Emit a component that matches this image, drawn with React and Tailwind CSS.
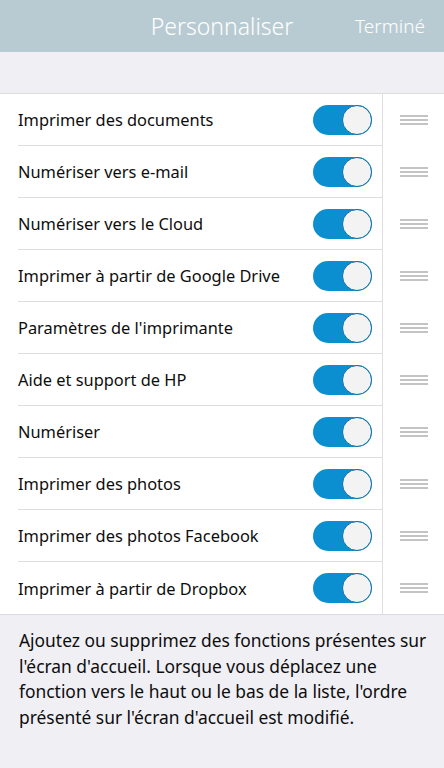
import React from 'react';

const items = [
  'Imprimer des documents',
  'Numériser vers e-mail',
  'Numériser vers le Cloud',
  'Imprimer à partir de Google Drive',
  "Paramètres de l'imprimante",
  'Aide et support de HP',
  'Numériser',
  'Imprimer des photos',
  'Imprimer des photos Facebook',
  'Imprimer à partir de Dropbox',
];

const Toggle = () => (
  <div className="w-[59px] h-[30px] rounded-full bg-[#0b8fd0] flex items-center justify-end">
    <div className="w-[30px] h-[30px] rounded-full bg-[#f3f3f3] border-[1.5px] border-[#0a6fa6]"></div>
  </div>
);

const Handle = () => (
  <div className="flex flex-col gap-[2px] w-[28px]">
    <div className="h-[2px] bg-[#c4c4c4]"></div>
    <div className="h-[2px] bg-[#c4c4c4]"></div>
    <div className="h-[2px] bg-[#c4c4c4]"></div>
  </div>
);

const Row = ({ label, last }) => (
  <div className="flex h-[52px]">
    <div className={`flex-1 ml-[18px] flex items-center justify-between pr-[10px] ${last ? '' : 'border-b border-[#dedede]'}`}>
      <span className="text-[16.4px] text-[#0d0d0d] pt-[2px]">{label}</span>
      <Toggle />
    </div>
    <div className="w-[62px] border-l border-[#dedede] flex items-center justify-center pl-[1px]">
      <Handle />
    </div>
  </div>
);

export default function App() {
  return (
    <div className="w-[444px] h-[768px] bg-[#efeff4] flex flex-col" style={{ fontFamily: '"Noto Sans", "Open Sans", sans-serif' }}>
      <div className="h-[52px] bg-[#b9cbd2] flex items-center relative">
        <div className="flex-1 text-center text-white text-[23px] font-light">Personnaliser</div>
        <div className="absolute right-[19px] text-white text-[19px] font-light">Terminé</div>
      </div>
      <div className="h-[42px] border-b border-[#dcdce0]"></div>
      <div className="bg-white border-b border-[#dcdce0]">
        {items.map((label, i) => (
          <Row key={label} label={label} last={i === items.length - 1} />
        ))}
      </div>
      <p className="pl-[19px] pr-[8px] pt-[13px] text-[17.4px] leading-[25.5px] text-[#0d0d0d]">
        Ajoutez ou supprimez des fonctions présentes sur l'écran d'accueil. Lorsque vous déplacez une fonction vers le haut ou le bas de la liste, l'ordre présenté sur l'écran d'accueil est modifié.
      </p>
    </div>
  );
}
